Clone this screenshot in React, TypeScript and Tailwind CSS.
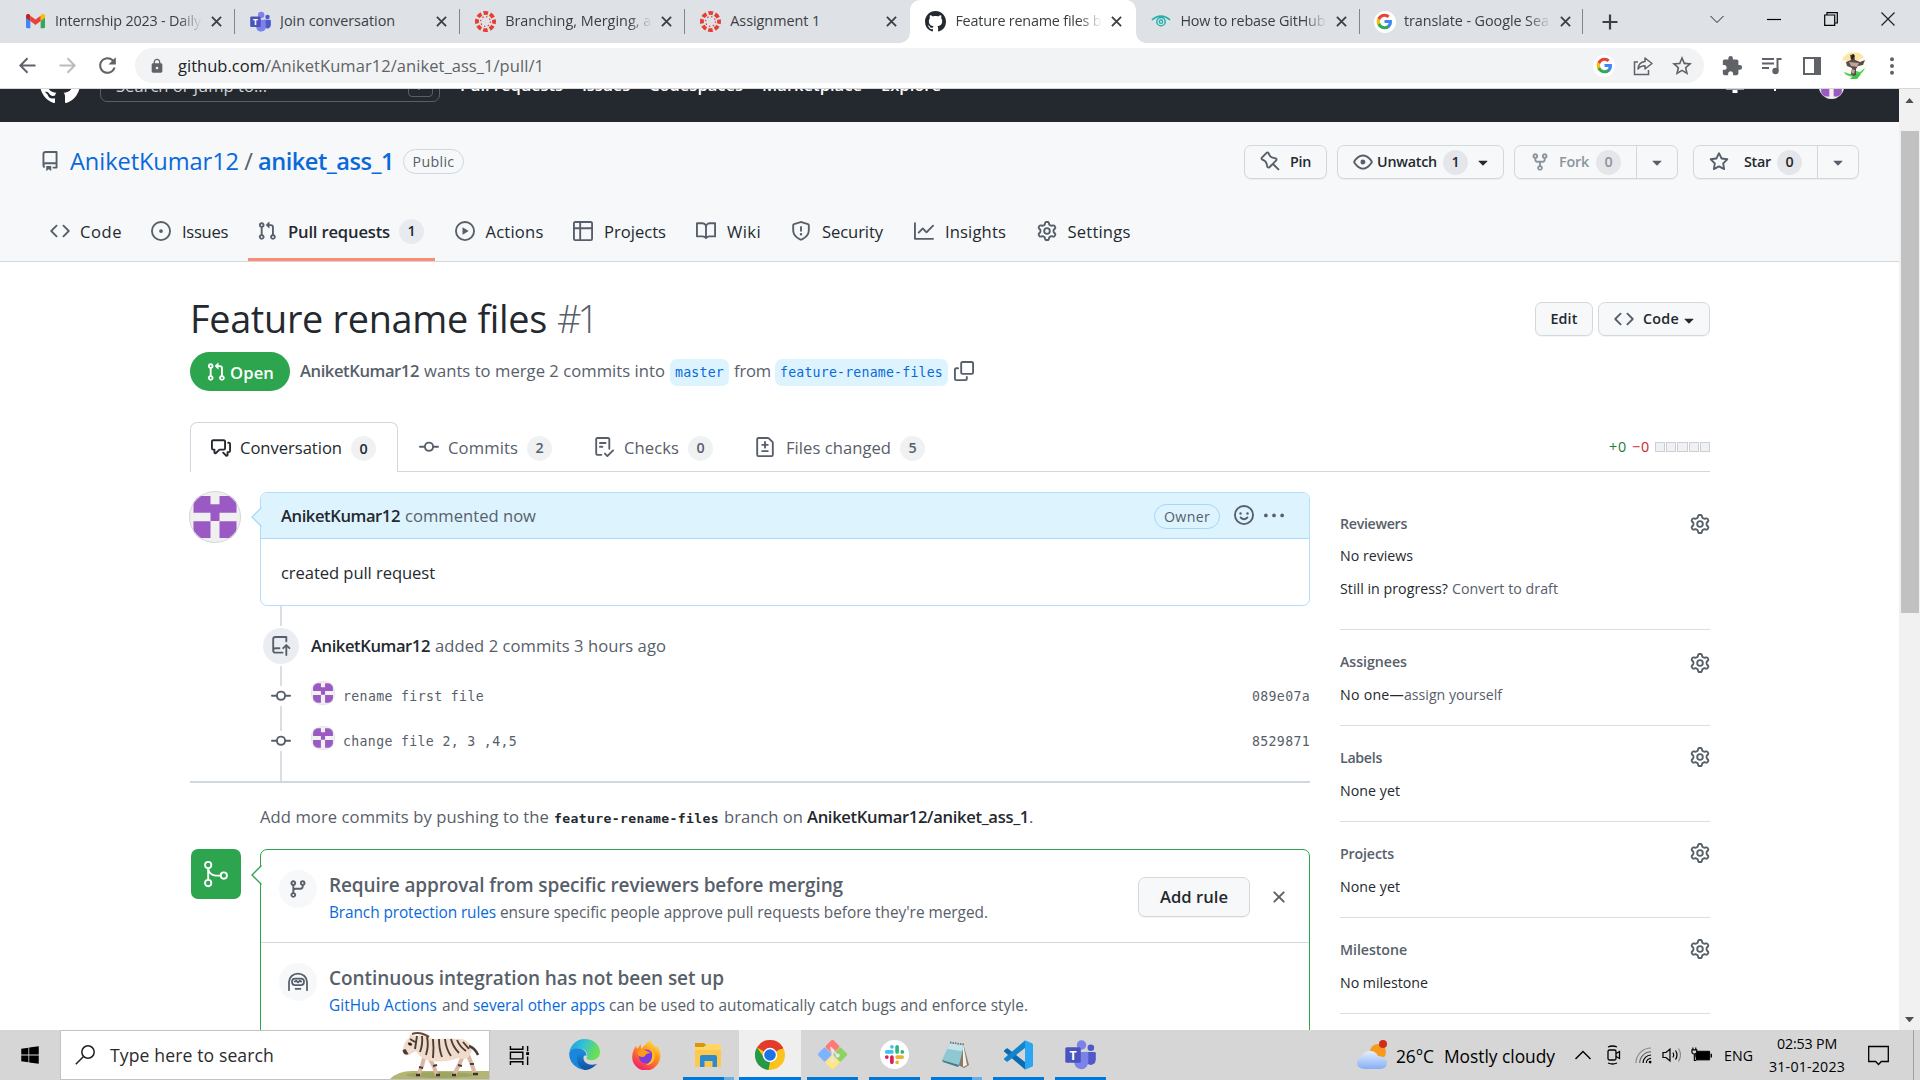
import React, { useLayoutEffect, useRef, useState } from "react";
import { GoGitMerge } from "react-icons/go";
import { MdExtension, MdLock, MdRefresh, MdStarBorder } from "react-icons/md";
import { FaWindows } from "react-icons/fa";

const octicons = {
  pr: "M1.5 3.25a2.25 2.25 0 1 1 3 2.122v5.256a2.251 2.251 0 1 1-1.5 0V5.372A2.25 2.25 0 0 1 1.5 3.25Zm5.677-.177L9.573.677A.25.25 0 0 1 10 .854V2.5h1A2.5 2.5 0 0 1 13.5 5v5.628a2.251 2.251 0 1 1-1.5 0V5a1 1 0 0 0-1-1h-1v1.646a.25.25 0 0 1-.427.177L7.177 3.427a.25.25 0 0 1 0-.354ZM3.75 2.5a.75.75 0 1 0 0 1.5.75.75 0 0 0 0-1.5Zm0 9.5a.75.75 0 1 0 0 1.5.75.75 0 0 0 0-1.5Zm8.25.75a.75.75 0 1 0 1.5 0 .75.75 0 0 0-1.5 0Z",
  code: "m11.28 3.22 4.25 4.25a.75.75 0 0 1 0 1.06l-4.25 4.25a.749.749 0 0 1-1.275-.326.749.749 0 0 1 .215-.734L13.94 8l-3.72-3.72a.749.749 0 0 1 .326-1.275.749.749 0 0 1 .734.215Zm-6.56 0a.751.751 0 0 1 1.042.018.751.751 0 0 1 .018 1.042L2.06 8l3.72 3.72a.749.749 0 0 1-.326 1.275.749.749 0 0 1-.734-.215L.47 8.53a.75.75 0 0 1 0-1.06Z",
  issue: "M8 9.5a1.5 1.5 0 1 0 0-3 1.5 1.5 0 0 0 0 3ZM8 0a8 8 0 1 1 0 16A8 8 0 0 1 8 0ZM1.5 8a6.5 6.5 0 1 0 13 0 6.5 6.5 0 0 0-13 0Z",
  play: "M8 0a8 8 0 1 1 0 16A8 8 0 0 1 8 0ZM1.5 8a6.5 6.5 0 1 0 13 0 6.5 6.5 0 0 0-13 0Zm4.879-2.773 4.264 2.559a.25.25 0 0 1 0 .428l-4.264 2.559A.25.25 0 0 1 6 10.559V5.442a.25.25 0 0 1 .379-.215Z",
  table: "M0 1.75C0 .784.784 0 1.75 0h12.5C15.216 0 16 .784 16 1.75v12.5A1.75 1.75 0 0 1 14.25 16H1.75A1.75 1.75 0 0 1 0 14.25ZM6.5 6.5v8h7.75a.25.25 0 0 0 .25-.25V6.5Zm8-1.5V1.75a.25.25 0 0 0-.25-.25H6.5V5Zm-13 1.5v7.75c0 .138.112.25.25.25H5v-8ZM5 5V1.5H1.75a.25.25 0 0 0-.25.25V5Z",
  book: "M0 1.75A.75.75 0 0 1 .75 1h4.253c1.227 0 2.317.59 3 1.501A3.743 3.743 0 0 1 11.006 1h4.245a.75.75 0 0 1 .75.75v10.5a.75.75 0 0 1-.75.75h-4.507a2.25 2.25 0 0 0-1.591.659l-.622.621a.75.75 0 0 1-1.06 0l-.622-.621A2.25 2.25 0 0 0 5.258 13H.75a.75.75 0 0 1-.75-.75Zm7.251 10.324.004-5.073-.002-2.253A2.25 2.25 0 0 0 5.003 2.5H1.5v9h3.757a3.75 3.75 0 0 1 1.994.574ZM8.755 4.75l-.004 7.322a3.752 3.752 0 0 1 1.992-.572H14.5v-9h-3.495a2.25 2.25 0 0 0-2.25 2.25Z",
  shield: "M7.467.133a1.748 1.748 0 0 1 1.066 0l5.25 1.68A1.75 1.75 0 0 1 15 3.48V7c0 1.566-.32 3.182-1.303 4.682-.983 1.498-2.585 2.813-5.032 3.855a1.697 1.697 0 0 1-1.33 0c-2.447-1.042-4.049-2.357-5.032-3.855C1.32 10.182 1 8.566 1 7V3.48a1.755 1.755 0 0 1 1.217-1.667Zm.61 1.429a.25.25 0 0 0-.153 0l-5.25 1.68a.25.25 0 0 0-.174.238V7c0 1.358.275 2.666 1.057 3.86.784 1.194 2.121 2.34 4.366 3.297a.196.196 0 0 0 .154 0c2.245-.956 3.582-2.104 4.366-3.298C13.225 9.666 13.5 8.36 13.5 7V3.48a.251.251 0 0 0-.174-.237l-5.25-1.68ZM8.75 4.75v3a.75.75 0 0 1-1.5 0v-3a.75.75 0 0 1 1.5 0ZM9 10.5a1 1 0 1 1-2 0 1 1 0 0 1 2 0Z",
  graph: "M1.5 1.75V13.5h13.75a.75.75 0 0 1 0 1.5H.75a.75.75 0 0 1-.75-.75V1.75a.75.75 0 0 1 1.5 0Zm14.28 2.53-5.25 5.25a.75.75 0 0 1-1.06 0L7 7.06 4.28 9.78a.751.751 0 0 1-1.042-.018.751.751 0 0 1-.018-1.042l3.25-3.25a.75.75 0 0 1 1.06 0L10 7.94l4.72-4.72a.751.751 0 0 1 1.042.018.751.751 0 0 1 .018 1.042Z",
  gear: "M8 0a8.2 8.2 0 0 1 .701.031C9.444.095 9.99.645 10.16 1.29l.288 1.107c.018.066.079.158.212.224.231.114.454.243.668.386.123.082.233.09.299.071l1.103-.303c.644-.176 1.392.021 1.82.63.27.385.506.792.704 1.218.315.675.111 1.422-.364 1.891l-.814.806c-.049.048-.098.147-.088.294.016.257.016.515 0 .772-.01.147.038.246.088.294l.814.806c.475.469.679 1.216.364 1.891a7.977 7.977 0 0 1-.704 1.217c-.428.61-1.176.807-1.82.63l-1.102-.302c-.067-.019-.177-.011-.3.071a5.909 5.909 0 0 1-.668.386c-.133.066-.194.158-.211.224l-.29 1.106c-.168.646-.715 1.196-1.458 1.26a8.006 8.006 0 0 1-1.402 0c-.743-.064-1.289-.614-1.458-1.26l-.289-1.106c-.018-.066-.079-.158-.212-.224a5.738 5.738 0 0 1-.668-.386c-.123-.082-.233-.09-.299-.071l-1.103.303c-.644.176-1.392-.021-1.82-.63a8.12 8.12 0 0 1-.704-1.218c-.315-.675-.111-1.422.363-1.891l.815-.806c.05-.048.098-.147.088-.294a6.214 6.214 0 0 1 0-.772c.01-.147-.038-.246-.088-.294l-.815-.806C.635 6.045.431 5.298.746 4.623a7.92 7.92 0 0 1 .704-1.217c.428-.61 1.176-.807 1.82-.63l1.102.302c.067.019.177.011.3-.071.214-.143.437-.272.668-.386.133-.066.194-.158.211-.224l.29-1.106C6.009.645 6.556.095 7.299.03 7.53.01 7.764 0 8 0Zm-.571 1.525c-.036.003-.108.036-.137.146l-.289 1.105c-.147.561-.549.967-.998 1.189-.173.086-.34.183-.5.29-.417.278-.97.423-1.529.27l-1.103-.303c-.109-.03-.175.016-.195.045-.22.312-.412.644-.573.99-.014.031-.021.11.059.19l.815.806c.411.406.562.957.53 1.456a4.709 4.709 0 0 0 0 .582c.032.499-.119 1.05-.53 1.456l-.815.806c-.081.08-.073.159-.059.19.162.346.353.677.573.989.02.03.085.076.195.046l1.102-.303c.56-.153 1.113-.008 1.53.27.161.107.328.204.501.29.447.222.85.629.997 1.189l.289 1.105c.029.109.101.143.137.146a6.6 6.6 0 0 0 1.142 0c.036-.003.108-.036.137-.146l.289-1.105c.147-.561.549-.967.998-1.189.173-.086.34-.183.5-.29.417-.278.97-.423 1.529-.27l1.103.303c.109.029.175-.016.195-.045.22-.313.411-.644.573-.99.014-.031.021-.11-.059-.19l-.815-.806c-.411-.406-.562-.957-.53-1.456a4.709 4.709 0 0 0 0-.582c-.032-.499.119-1.05.53-1.456l.815-.806c.081-.08.073-.159.059-.19a6.464 6.464 0 0 0-.573-.989c-.02-.03-.085-.076-.195-.046l-1.102.303c-.56.153-1.113.008-1.53-.27a4.44 4.44 0 0 0-.501-.29c-.447-.222-.85-.629-.997-1.189l-.289-1.105c-.029-.11-.101-.143-.137-.146a6.6 6.6 0 0 0-1.142 0ZM11 8a3 3 0 1 1-6 0 3 3 0 0 1 6 0ZM9.5 8a1.5 1.5 0 1 0-3.001.001A1.5 1.5 0 0 0 9.5 8Z",
  repo: "M2 2.5A2.5 2.5 0 0 1 4.5 0h8.75a.75.75 0 0 1 .75.75v12.5a.75.75 0 0 1-.75.75h-2.5a.75.75 0 0 1 0-1.5h1.75v-2h-8a1 1 0 0 0-.714 1.7.75.75 0 1 1-1.072 1.05A2.495 2.495 0 0 1 2 11.5Zm10.5-1h-8a1 1 0 0 0-1 1v6.708A2.486 2.486 0 0 1 4.5 9h8ZM5 12.25a.25.25 0 0 1 .25-.25h3.5a.25.25 0 0 1 .25.25v3.25a.25.25 0 0 1-.4.2l-1.45-1.087a.249.249 0 0 0-.3 0L5.4 15.7a.25.25 0 0 1-.4-.2Z",
  pin: "m11.294.984 3.722 3.722a1.75 1.75 0 0 1-.504 2.826l-1.327.613a3.089 3.089 0 0 0-1.707 2.084l-.584 2.454c-.317 1.332-1.972 1.8-2.94.832L5.75 11.311 1.78 15.28a.749.749 0 1 1-1.06-1.06l3.969-3.97-2.204-2.204c-.968-.968-.5-2.623.832-2.94l2.454-.584a3.08 3.08 0 0 0 2.084-1.707l.613-1.327a1.75 1.75 0 0 1 2.826-.504ZM6.283 9.723l2.732 2.731a.25.25 0 0 0 .42-.119l.584-2.454a4.586 4.586 0 0 1 2.537-3.098l1.328-.613a.25.25 0 0 0 .072-.404l-3.722-3.722a.25.25 0 0 0-.404.072l-.613 1.328a4.584 4.584 0 0 1-3.098 2.537l-2.454.584a.25.25 0 0 0-.119.42l2.731 2.732Z",
  eye: "M8 2c1.981 0 3.671.992 4.933 2.078 1.27 1.091 2.187 2.345 2.637 3.023a1.62 1.62 0 0 1 0 1.798c-.45.678-1.367 1.932-2.637 3.023C11.67 13.008 9.981 14 8 14c-1.981 0-3.671-.992-4.933-2.078C1.797 10.83.88 9.576.43 8.898a1.62 1.62 0 0 1 0-1.798c.45-.677 1.367-1.931 2.637-3.022C4.33 2.992 6.019 2 8 2ZM1.679 7.932a.12.12 0 0 0 0 .136c.411.622 1.241 1.75 2.366 2.717C5.176 11.758 6.527 12.5 8 12.5c1.473 0 2.825-.742 3.955-1.715 1.124-.967 1.954-2.096 2.366-2.717a.12.12 0 0 0 0-.136c-.412-.621-1.242-1.75-2.366-2.717C10.824 4.242 9.473 3.5 8 3.5c-1.473 0-2.825.742-3.955 1.715-1.124.967-1.954 2.096-2.366 2.717ZM8 10a2 2 0 1 1-.001-3.999A2 2 0 0 1 8 10Z",
  fork: "M5 5.372v.878c0 .414.336.75.75.75h4.5a.75.75 0 0 0 .75-.75v-.878a2.25 2.25 0 1 1 1.5 0v.878a2.25 2.25 0 0 1-2.25 2.25h-1.5v2.128a2.251 2.251 0 1 1-1.5 0V8.5h-1.5A2.25 2.25 0 0 1 3.5 6.25v-.878a2.25 2.25 0 1 1 1.5 0ZM5 3.25a.75.75 0 1 0-1.5 0 .75.75 0 0 0 1.5 0Zm6.75.75a.75.75 0 1 0 0-1.5.75.75 0 0 0 0 1.5Zm-3 8.75a.75.75 0 1 0-1.5 0 .75.75 0 0 0 1.5 0Z",
  star: "M8 .25a.75.75 0 0 1 .673.418l1.882 3.815 4.21.612a.75.75 0 0 1 .416 1.279l-3.046 2.97.719 4.192a.751.751 0 0 1-1.088.791L8 12.347l-3.766 1.98a.75.75 0 0 1-1.088-.79l.72-4.194L.818 6.374a.75.75 0 0 1 .416-1.28l4.21-.611L7.327.668A.75.75 0 0 1 8 .25Zm0 2.445L6.615 5.5a.75.75 0 0 1-.564.41l-3.097.45 2.24 2.184a.75.75 0 0 1 .216.664l-.528 3.084 2.769-1.456a.75.75 0 0 1 .698 0l2.77 1.456-.53-3.084a.75.75 0 0 1 .216-.664l2.24-2.183-3.096-.45a.75.75 0 0 1-.564-.41L8 2.694Z",
  copy: "M0 6.75C0 5.784.784 5 1.75 5h1.5a.75.75 0 0 1 0 1.5h-1.5a.25.25 0 0 0-.25.25v7.5c0 .138.112.25.25.25h7.5a.25.25 0 0 0 .25-.25v-1.5a.75.75 0 0 1 1.5 0v1.5A1.75 1.75 0 0 1 9.25 16h-7.5A1.75 1.75 0 0 1 0 14.25ZM5 1.75C5 .784 5.784 0 6.75 0h7.5C15.216 0 16 .784 16 1.75v7.5A1.75 1.75 0 0 1 14.25 11h-7.5A1.75 1.75 0 0 1 5 9.25Zm1.75-.25a.25.25 0 0 0-.25.25v7.5c0 .138.112.25.25.25h7.5a.25.25 0 0 0 .25-.25v-7.5a.25.25 0 0 0-.25-.25Z",
  discussion: "M1.75 1h8.5c.966 0 1.75.784 1.75 1.75v5.5A1.75 1.75 0 0 1 10.25 10H7.061l-2.574 2.573A1.458 1.458 0 0 1 2 11.543V10h-.25A1.75 1.75 0 0 1 0 8.25v-5.5C0 1.784.784 1 1.75 1ZM1.5 2.75v5.5c0 .138.112.25.25.25h1a.75.75 0 0 1 .75.75v2.19l2.72-2.72a.749.749 0 0 1 .53-.22h3.5a.25.25 0 0 0 .25-.25v-5.5a.25.25 0 0 0-.25-.25h-8.5a.25.25 0 0 0-.25.25Zm13 2a.25.25 0 0 0-.25-.25h-.5a.75.75 0 0 1 0-1.5h.5c.966 0 1.75.784 1.75 1.75v5.5A1.75 1.75 0 0 1 14.25 12H14v1.543a1.458 1.458 0 0 1-2.487 1.03L9.22 12.28a.749.749 0 0 1 .326-1.275.749.749 0 0 1 .734.215l2.22 2.22v-2.19a.75.75 0 0 1 .75-.75h1a.25.25 0 0 0 .25-.25Z",
  commit: "M11.93 8.5a4.002 4.002 0 0 1-7.86 0H.75a.75.75 0 0 1 0-1.5h3.32a4.002 4.002 0 0 1 7.86 0h3.32a.75.75 0 0 1 0 1.5Zm-1.43-.75a2.5 2.5 0 1 0-5 0 2.5 2.5 0 0 0 5 0Z",
  checklist: "M2.5 1.75v11.5c0 .138.112.25.25.25h3.17a.75.75 0 0 1 0 1.5H2.75A1.75 1.75 0 0 1 1 13.25V1.75C1 .784 1.784 0 2.75 0h8.5C12.216 0 13 .784 13 1.75v7.736a.75.75 0 0 1-1.5 0V1.75a.25.25 0 0 0-.25-.25h-8.5a.25.25 0 0 0-.25.25Zm13.274 9.537v-.001l-4.557 4.45a.75.75 0 0 1-1.055-.008l-1.943-1.95a.75.75 0 0 1 1.062-1.058l1.419 1.425 4.026-3.932a.75.75 0 1 1 1.048 1.074ZM4.75 4h4.5a.75.75 0 0 1 0 1.5h-4.5a.75.75 0 0 1 0-1.5ZM4 7.75A.75.75 0 0 1 4.75 7h2a.75.75 0 0 1 0 1.5h-2A.75.75 0 0 1 4 7.75Z",
  diff: "M1 1.75C1 .784 1.784 0 2.75 0h7.586c.464 0 .909.184 1.237.513l2.914 2.914c.329.328.513.773.513 1.237v9.586A1.75 1.75 0 0 1 13.25 16H2.75A1.75 1.75 0 0 1 1 14.25Zm1.75-.25a.25.25 0 0 0-.25.25v12.5c0 .138.112.25.25.25h10.5a.25.25 0 0 0 .25-.25V4.664a.25.25 0 0 0-.073-.177l-2.914-2.914a.25.25 0 0 0-.177-.073ZM8 3.25a.75.75 0 0 1 .75.75v1.5h1.5a.75.75 0 0 1 0 1.5h-1.5v1.5a.75.75 0 0 1-1.5 0V7h-1.5a.75.75 0 0 1 0-1.5h1.5V4A.75.75 0 0 1 8 3.25Zm-3 8a.75.75 0 0 1 .75-.75h4.5a.75.75 0 0 1 0 1.5h-4.5a.75.75 0 0 1-.75-.75Z",
  push: "M1 2.5A2.5 2.5 0 0 1 3.5 0h8.75a.75.75 0 0 1 .75.75v3.5a.75.75 0 0 1-1.5 0V1.5h-8a1 1 0 0 0-1 1v6.708A2.493 2.493 0 0 1 3.5 9h3.25a.75.75 0 0 1 0 1.5H3.5a1 1 0 0 0 0 2h5.75a.75.75 0 0 1 0 1.5H3.5A2.5 2.5 0 0 1 1 11.5Zm13.23 7.79h-.001l-1.224-1.224v6.184a.75.75 0 0 1-1.5 0V9.066L10.28 10.29a.75.75 0 0 1-1.06-1.061l2.505-2.504a.75.75 0 0 1 1.06 0L15.29 9.23a.751.751 0 0 1-.018 1.042.751.751 0 0 1-1.042.018Z",
  branch: "M9.5 3.25a2.25 2.25 0 1 1 3 2.122V6A2.5 2.5 0 0 1 10 8.5H6a1 1 0 0 0-1 1v1.128a2.251 2.251 0 1 1-1.5 0V5.372a2.25 2.25 0 1 1 1.5 0v1.836A2.493 2.493 0 0 1 6 7h4a1 1 0 0 0 1-1v-.628A2.25 2.25 0 0 1 9.5 3.25Zm-6 0a.75.75 0 1 0 1.5 0 .75.75 0 0 0-1.5 0Zm8.25-.75a.75.75 0 1 0 0 1.5.75.75 0 0 0 0-1.5ZM4.25 12a.75.75 0 1 0 0 1.5.75.75 0 0 0 0-1.5Z",
  x: "M3.72 3.72a.75.75 0 0 1 1.06 0L8 6.94l3.22-3.22a.749.749 0 0 1 1.275.326.749.749 0 0 1-.215.734L9.06 8l3.22 3.22a.749.749 0 0 1-.326 1.275.749.749 0 0 1-.734-.215L8 9.06l-3.22 3.22a.751.751 0 0 1-1.042-.018.751.751 0 0 1-.018-1.042L6.94 8 3.72 4.78a.75.75 0 0 1 0-1.06Z",
  mark: "M8 0c4.42 0 8 3.58 8 8a8.013 8.013 0 0 1-5.45 7.59c-.4.08-.55-.17-.55-.38 0-.27.01-1.13.01-2.2 0-.75-.25-1.23-.54-1.48 1.78-.2 3.65-.88 3.65-3.95 0-.88-.31-1.59-.82-2.15.08-.2.36-1.02-.08-2.12 0 0-.67-.22-2.2.82-.64-.18-1.32-.27-2-.27-.68 0-1.36.09-2 .27-1.53-1.03-2.2-.82-2.2-.82-.44 1.1-.16 1.92-.08 2.12-.51.56-.82 1.28-.82 2.15 0 3.06 1.86 3.75 3.64 3.95-.23.2-.44.55-.51 1.07-.46.21-1.61.55-2.33-.66-.15-.24-.6-.83-1.23-.82-.67.01-.27.38.01.53.34.19.73.9.82 1.13.16.45.68 1.31 2.69.94 0 .67.01 1.3.01 1.49 0 .21-.15.45-.55.38A7.995 7.995 0 0 1 0 8c0-4.42 3.58-8 8-8Z",
  triangle: "m4.427 7.427 3.396 3.396a.25.25 0 0 0 .354 0l3.396-3.396A.25.25 0 0 0 11.396 7H4.604a.25.25 0 0 0-.177.427Z",
  kebab: "M8 9a1.5 1.5 0 1 0 0-3 1.5 1.5 0 0 0 0 3ZM1.5 9a1.5 1.5 0 1 0 0-3 1.5 1.5 0 0 0 0 3Zm13 0a1.5 1.5 0 1 0 0-3 1.5 1.5 0 0 0 0 3Z",
};

type IconName = keyof typeof octicons;

function Oct({ n, className = "size-5 text-[#57606a]" }: { n: IconName; className?: string }) {
  return (
    <svg viewBox="0 0 16 16" fill="currentColor" className={`shrink-0 ${className}`}>
      <path fillRule="evenodd" d={octicons[n]} />
    </svg>
  );
}

/* Single-line label whose tracking is adjusted so that it spans `w` pixels. */
function T({ w, children, className = "" }: { w: number; children: string; className?: string }) {
  const ref = useRef<HTMLSpanElement>(null);
  const [spacing, setSpacing] = useState(0);
  useLayoutEffect(() => {
    const natural = ref.current!.getBoundingClientRect().width;
    setSpacing((w - natural) / children.length);
  }, [w, children]);
  return (
    <span ref={ref} style={{ letterSpacing: spacing }} className={`inline-block shrink-0 whitespace-pre ${className}`}>
      {children}
    </span>
  );
}

function Identicon({ className }: { className: string }) {
  return (
    <svg viewBox="0 0 52 52" className={`shrink-0 ${className}`}>
      <defs>
        <clipPath id="avatar-clip"><circle cx="26" cy="26" r="26" /></clipPath>
      </defs>
      <g clipPath="url(#avatar-clip)">
        <rect width="52" height="52" fill="#f0f0f0" />
        <path d="M4.5 5h17v8.3h9V5h17v16.7h-17V30h-9v-8.3h-17zM4.5 30.2h17V47h-17zM30.5 30.2h17V47h-17z" fill="#9b59c4" />
      </g>
      <circle cx="26" cy="26" r="25.5" fill="none" stroke="#d5d8dc" />
    </svg>
  );
}

/* ---------- brand icons ---------- */

const Gmail = () => (
  <svg viewBox="0 0 24 18" className="w-[19px]">
    <path d="M0 2v14.5A1.5 1.5 0 0 0 1.5 18H5.5V8.5z" fill="#4285f4" />
    <path d="M24 2v14.500A1.500 1.500 0 0 1 22.500 18H18.500V8.500z" fill="#34a853" />
    <path d="M18.500 2.200v6.700L24 4.700V2.500C24 .3 21.400-.9 19.700.4z" fill="#fbbc04" />
    <path d="M5.500 8.900V2.200L12 7.100l6.500-4.900v6.700L12 13.800z" fill="#ea4335" />
    <path d="M0 2.500v2.200l5.500 4.200V2.200L4.300.4C2.600-.9 0 .3 0 2.500z" fill="#c5221f" />
  </svg>
);

function Teams({ className }: { className: string }) {
  return (
    <svg viewBox="0 0 30 30" className={className}>
      <circle cx="25" cy="8.500" r="3.200" fill="#5059c9" />
      <circle cx="16" cy="5.800" r="4.600" fill="#7b83eb" />
      <path d="M20 12.500h8.500q1.300 0 1.300 1.300v6.200a5 5 0 0 1-8 4z" fill="#5059c9" />
      <path d="M9 12.500h13.500v9.500a6.800 6.800 0 0 1-13.500 1.500z" fill="#7b83eb" />
      <rect x="0.300" y="8" width="15" height="15" rx="1.500" fill="#4b53bc" />
      <text x="7.800" y="20" textAnchor="middle" fontSize="12" fontWeight="700" fill="#fff" fontFamily="Open Sans, sans-serif">T</text>
    </svg>
  );
}

const Canvas = () => (
  <svg viewBox="0 0 24 24" className="size-[21px]">
    <circle cx="12" cy="12" r="9.800" fill="none" stroke="#e63e30" strokeWidth="4.400" strokeDasharray="5.200 2.497" strokeDashoffset="2.600" />
    <circle cx="12" cy="12" r="5.600" fill="none" stroke="#e63e30" strokeWidth="1.500" strokeDasharray="1.500 2.898" />
  </svg>
);

const EyeLogo = () => (
  <svg viewBox="0 0 22 18" className="w-[20px]" fill="none" stroke="#22b0ac">
    <path d="M1 7.500Q11-.5 21 7.500" strokeWidth="1.800" />
    <circle cx="11" cy="9.500" r="4.600" strokeWidth="1.600" />
    <circle cx="11" cy="9.500" r="1.800" strokeWidth="1.400" />
  </svg>
);

function Google({ className }: { className: string }) {
  return (
    <span className="grid size-[22px] shrink-0 place-items-center rounded-full bg-white">
      <svg viewBox="0 0 24 24" className={className}>
        <path fill="#4285F4" d="M22.560 12.250c0-.78-.07-1.530-.2-2.250H12v4.260h5.920c-.26 1.370-1.040 2.530-2.210 3.310v2.770h3.570c2.080-1.920 3.280-4.740 3.280-8.090z" />
        <path fill="#34A853" d="M12 23c2.970 0 5.460-.98 7.280-2.660l-3.570-2.770c-.98.66-2.230 1.060-3.710 1.060-2.860 0-5.290-1.930-6.160-4.530H2.180v2.840C3.990 20.530 7.700 23 12 23z" />
        <path fill="#FBBC05" d="M5.840 14.090c-.22-.66-.35-1.360-.35-2.090s.13-1.430.35-2.090V7.070H2.180C1.430 8.550 1 10.220 1 12s.43 3.450 1.180 4.930l2.850-2.220.81-.62z" />
        <path fill="#EA4335" d="M12 5.380c1.620 0 3.060.56 4.210 1.640l3.150-3.150C17.450 2.090 14.970 1 12 1 7.700 1 3.990 3.470 2.180 7.070l3.660 2.840c.87-2.600 3.300-4.530 6.160-4.530z" />
      </svg>
    </span>
  );
}

/* ---------- browser chrome ---------- */

const tabs = [
  { title: "Internship 2023 - Daily", w: 146, icon: <Gmail />, fade: true },
  { title: "Join conversation", w: 115, icon: <Teams className="size-[21px]" /> },
  { title: "Branching, Merging, a", w: 146, icon: <Canvas />, fade: true },
  { title: "Assignment 1", w: 90, icon: <Canvas /> },
  { title: "Feature rename files b", w: 146, icon: <Oct n="mark" className="size-[21px] text-[#24292f]" />, active: true, fade: true },
  { title: "How to rebase GitHub", w: 145, icon: <EyeLogo />, fade: true },
  { title: "translate - Google Sea", w: 145, icon: <Google className="size-[17px]" />, fade: true },
];

function TabStrip() {
  return (
    <div className="flex h-[43px] shrink-0 bg-[#dee1e6] pl-[10px]">
      {tabs.map((t, i) => (
        <div
          key={i}
          className={`relative flex h-[43px] shrink-0 items-center ${t.active ? "w-[226px] rounded-t-[10px] bg-white pl-[15px]" : i > 4 ? "w-[223.500px] pl-[14px]" : "w-[225.100px] pl-[15px]"}`}
        >
          <span className="grid w-[21px] place-items-center">{t.icon}</span>
          <div
            className={`-mt-[2px] ml-[9px] w-[147px] overflow-hidden text-[14.400px] text-[#3c4043] ${t.fade ? "[mask-image:linear-gradient(to_right,#000_84%,transparent)]" : ""}`}
          >
            <T w={t.w}>{t.title}</T>
          </div>
          <svg viewBox="0 0 12 12" className="ml-[9px] size-[11px] shrink-0 stroke-[#3c4043]" strokeWidth="2">
            <path d="M1 1l10 10M11 1L1 11" />
          </svg>
          {t.active ? (
            <>
              <span className="absolute bottom-0 -left-[10px] size-[10px] bg-[radial-gradient(circle_at_0_0,transparent_9.500px,#fff_10px)]" />
              <span className="absolute bottom-0 -right-[10px] size-[10px] bg-[radial-gradient(circle_at_100%_0,transparent_9.500px,#fff_10px)]" />
            </>
          ) : (
            i !== 3 && <span className="absolute top-[9px] right-0 h-[25px] w-px bg-[#80868b]" />
          )}
        </div>
      ))}
      <div className="flex flex-1 items-center">
        <svg viewBox="0 0 16 16" className="ml-[19px] size-4 stroke-[#3c4043]" strokeWidth="2.200">
          <path d="M8 .5v15M.5 8h15" />
        </svg>
        <div className="ml-[92px] flex items-center gap-[43px] pb-[6px]">
          <svg viewBox="0 0 14 14" className="size-[14px] fill-none stroke-[#202124]"><path d="M.5 4L7 10.500 13.500 4" /></svg>
          <svg viewBox="0 0 14 14" className="size-[14px] fill-none stroke-[#000]"><path d="M0 7.500h14" strokeWidth="1.200" /></svg>
          <svg viewBox="0 0 14 14" className="size-[14px] fill-none stroke-[#000]" strokeWidth="1.200"><path d="M.7 3h10v10.300H.7zM3 3V.7h10.300V11H11" /></svg>
          <svg viewBox="0 0 14 14" className="size-[14px] fill-none stroke-[#202124]" strokeWidth="1.200"><path d="M.5.5l13 13M13.500.5l-13 13" /></svg>
        </div>
      </div>
    </div>
  );
}

function Arrow({ flip, className }: { flip?: boolean; className: string }) {
  return (
    <svg viewBox="0 0 17 17" className={`size-[17px] fill-none stroke-2 ${flip ? "-scale-x-100" : ""} ${className}`}>
      <path d="M16.500 8.500h-15M8.500 1.200L1.300 8.500l7.200 7.300" />
    </svg>
  );
}

function Toolbar() {
  return (
    <div className="flex h-[46px] shrink-0 items-center border-b border-[#d5d7da] bg-white">
      <Arrow className="ml-[19px] stroke-[#5f6368]" />
      <Arrow flip className="ml-[23px] stroke-[#babcbe]" />
      <MdRefresh className="ml-[19px] size-[25px] text-[#5f6368]" />
      <div className="ml-[15px] flex h-[35px] w-[1569px] items-center rounded-full bg-[#f1f3f4]">
        <MdLock className="mt-px ml-[14px] size-[16px] text-[#5f6368]" />
        <div className="mt-[2px] ml-[13px] flex text-[16.500px] text-[#5f6368]">
          <T w={87} className="text-[#202124]">github.com</T>
          <T w={279}>/AniketKumar12/aniket_ass_1/pull/1</T>
        </div>
        <div className="ml-auto mr-[10px] flex items-center">
          <Google className="size-[17px]" />
          <svg viewBox="0 0 20 20" className="ml-[18px] size-5 fill-none stroke-[#5f6368]" strokeWidth="1.500">
            <path d="M5 6H1.500v12.500h14V14" />
            <path d="M12 2l7 5.500-7 5.500v-3.300c-3.500 0-5.500 1-7 3.300.3-4.500 3-7 7-7.500z" strokeLinejoin="round" />
          </svg>
          <MdStarBorder className="ml-[17px] size-[24px] text-[#5f6368]" />
        </div>
      </div>
      <MdExtension className="ml-[17px] size-[22px] text-[#5f6368]" />
      <svg viewBox="0 0 20 18" className="ml-[19px] w-5 fill-none stroke-[#5f6368]" strokeWidth="2">
        <path d="M0 2h12M0 6.500h12M0 11h7M15.500 14V2h4" />
        <circle cx="13.500" cy="14" r="2.200" fill="#5f6368" />
      </svg>
      <svg viewBox="0 0 18 18" className="ml-[21px] w-[18px]">
        <path d="M1 1h16v16H1z" fill="none" stroke="#5f6368" strokeWidth="2" />
        <path d="M11 1h6v16h-6z" fill="#5f6368" />
      </svg>
      <svg viewBox="0 0 28 28" className="ml-[19px] size-7">
        <circle cx="14" cy="14" r="13.500" fill="#fdfdf5" />
        <path d="M2 8a13 13 0 0 1 22-3l-8 5z" fill="#fbe7a3" />
        <path d="M4 20l6 2 6-3 4 1 5-4a13 13 0 0 1-20 6z" fill="#4fd15c" />
        <path d="M10 27q5-6 11-5l-4 5z" fill="#3fc54d" />
        <path d="M10 3l4-1 1 6 5 2 5-2-2 5-5 1-2 3v6l-3 1-2-2 1-6-5-2-1-4 5-2z" fill="#5b4a45" />
        <path d="M9 10l10 1-2 4-6-1zM12 17l3 1-1 4-2-1z" fill="#b9a79c" />
        <path d="M13 2l2 2-3 4-1-3z" fill="#20222b" />
      </svg>
      <svg viewBox="0 0 4 18" className="ml-[22px] h-[18px] fill-[#5f6368]">
        <circle cx="2" cy="2.200" r="2" /><circle cx="2" cy="9" r="2" /><circle cx="2" cy="15.800" r="2" />
      </svg>
    </div>
  );
}

/* ---------- page ---------- */

function SiteHeader() {
  return (
    <div className="h-[33px] shrink-0 overflow-hidden bg-[#24292f]">
      <div className="-mt-[44px] flex h-[78px] items-center text-white">
        <Oct n="mark" className="ml-[40px] size-10 text-white" />
        <div className="ml-[20px] flex h-[36px] w-[340px] items-center justify-between rounded-[7px] border border-[#57606a] pr-[6px] pl-[15px] text-[16.600px] text-[#d0d3d6]">
          <T w={151} className="pt-[4px]">Search or jump to...</T>
          <span className="grid h-[26px] w-[25px] place-items-center rounded-[4px] border border-[#57606a] text-[14px] text-[#8c959f]">/</span>
        </div>
        <nav className="ml-[20px] flex gap-[19px] pt-[2px] text-[16.600px] font-semibold">
          <T w={103}>Pull requests</T>
          <T w={48}>Issues</T>
          <T w={94}>Codespaces</T>
          <T w={100}>Marketplace</T>
          <T w={60}>Explore</T>
        </nav>
        <div className="ml-auto flex items-center pr-[55px]">
          <svg viewBox="0 0 20 20" className="size-5 fill-none stroke-white" strokeWidth="1.900">
            <path d="M4.500 8a5.500 5.500 0 0 1 11 0v3l2 3.500h-15l2-3.500z" /><path d="M7.500 17.500h5" strokeWidth="3" />
          </svg>
          <svg viewBox="0 0 16 16" className="ml-[22px] size-4 stroke-white" strokeWidth="2"><path d="M8 1v14M1 8h14" /></svg>
          <Oct n="triangle" className="ml-[3px] size-5 text-white" />
          <Identicon className="mt-[4px] ml-[13px] size-[25px]" />
        </div>
      </div>
    </div>
  );
}

const btn = "flex items-center rounded-[7px] border border-[#d5d8da] bg-[#f6f8fa] text-[14.300px] font-semibold text-[#24292f] shadow-[0_1px_0_rgba(27,31,36,0.05)]";

function Count({ children, className = "bg-[#e7eaee] text-[#24292f]" }: { children: string; className?: string }) {
  return <span className={`grid h-[25px] w-[25px] shrink-0 place-items-center rounded-full text-[14.300px] font-semibold ${className}`}>{children}</span>;
}

const repoNav: { icon: IconName; label: string; w: number; ml: string }[] = [
  { icon: "play", label: "Actions", w: 58, ml: "ml-[29.500px]" },
  { icon: "table", label: "Projects", w: 62, ml: "ml-[29.500px]" },
  { icon: "book", label: "Wiki", w: 34, ml: "ml-[30px]" },
  { icon: "shield", label: "Security", w: 61, ml: "ml-[30px]" },
  { icon: "graph", label: "Insights", w: 61, ml: "ml-[31px]" },
  { icon: "gear", label: "Settings", w: 63, ml: "ml-[30.500px]" },
];

function RepoHeader() {
  return (
    <div className="h-[140px] shrink-0 border-b border-[#d0d7de] bg-[#f6f8fa] pt-[23px]">
      <div className="flex h-[34px] items-center pr-[40px] pl-[40px]">
        <Oct n="repo" className="-mt-[2px] size-5 text-[#57606a]" />
        <div className="ml-[10px] flex text-[23.600px] text-[#0969da]">
          <T w={169}>AniketKumar12</T>
          <span className="w-[19px] text-center text-[#57606a]">/</span>
          <T w={136} className="font-semibold">aniket_ass_1</T>
        </div>
        <span className="-mt-px ml-[9px] grid h-[25px] w-[61px] place-items-center rounded-full border border-[#d0d7de] text-[14.200px] font-medium text-[#57606a]">
          <T w={42}>Public</T>
        </span>
        <div className="ml-auto flex">
          <div className={`${btn} h-[34px] w-[83px] pl-[15px]`}>
            <Oct n="pin" className="-mt-[2px] size-5 -scale-x-100 text-[#57606a]" /><T w={21} className="ml-[10px]">Pin</T>
          </div>
          <div className={`${btn} ml-[10px] h-[34px] w-[167px] pl-[15px]`}>
            <Oct n="eye" className="-mt-px size-5 text-[#57606a]" /><T w={60} className="ml-[4px]">Unwatch</T>
            <Count className="ml-[6px] bg-[#e4e6e9]">1</Count>
            <Oct n="triangle" className="ml-[5px] size-5" />
          </div>
          <div className={`${btn} ml-[10px] h-[34px] w-[164px]`}>
            <div className="flex h-full w-[122px] items-center border-r border-[#d5d8da] pl-[15px] text-[#8c959f]">
              <Oct n="fork" className="-mt-px size-5 text-[#8c959f]" /><T w={30} className="ml-[9px]">Fork</T>
              <Count className="ml-[7px] bg-[#e4e6e9]">0</Count>
            </div>
            <Oct n="triangle" className="-mt-px ml-[10px] size-5 text-[#57606a]" />
          </div>
          <div className={`${btn} ml-[15px] h-[34px] w-[166px]`}>
            <div className="flex h-full w-[124px] items-center border-r border-[#d5d8da] pl-[15px]">
              <Oct n="star" className="-mt-px size-5 text-[#57606a]" /><T w={27} className="ml-[15px]">Star</T>
              <Count className="ml-[6px] bg-[#e4e6e9]">0</Count>
            </div>
            <Oct n="triangle" className="-mt-px ml-[10px] size-5 text-[#57606a]" />
          </div>
        </div>
      </div>
      <nav className="mt-[22px] flex h-[60px] items-center pl-[50px] text-[16.600px] text-[#24292f]">
        <Oct n="code" /><T w={42} className="ml-[10px] pt-[3px]">Code</T>
        <Oct n="issue" className="ml-[29px] size-5 text-[#57606a]" /><T w={46} className="ml-[11px] pt-[3px]">Issues</T>
        <div className="ml-[20px] flex h-full w-[187px] items-center border-b-[3px] border-[#fd8c73] pt-[3px] pl-[9px] font-semibold">
          <Oct n="pr" /><T w={102} className="ml-[11px] pt-[3px]">Pull requests</T>
          <Count className="ml-[9px] bg-[#e7eaee]">1</Count>
        </div>
        <div className="-ml-[10px] flex items-center">
          {repoNav.map((r) => (
            <div key={r.label} className={`flex items-center ${r.ml}`}>
              <Oct n={r.icon} /><T w={r.w} className="ml-[11px] pt-[3px]">{r.label}</T>
            </div>
          ))}
        </div>
      </nav>
    </div>
  );
}

function PullHeader() {
  return (
    <div className="w-[1520px]">
      <div className="mt-[34px] flex h-[46px] items-center">
        <div className="flex items-baseline text-[37.800px] text-[#24292f]">
          <T w={357}>Feature rename files</T>
          <T w={38} className="ml-[10px] font-light text-[#57606a]">#1</T>
        </div>
        <div className={`${btn} ml-auto h-[34px] w-[58px] justify-center`}><T w={27}>Edit</T></div>
        <div className={`${btn} ml-[5px] h-[34px] w-[112px] pl-[15px]`}>
          <Oct n="code" className="-mt-px size-5 text-[#57606a]" /><T w={36} className="ml-[9px]">Code</T><Oct n="triangle" className="mt-px size-5" />
        </div>
      </div>
      <div className="mt-[10px] flex h-[39px] items-center text-[16.600px] text-[#57606a]">
        <div className="flex h-[39px] w-[100px] items-center rounded-full bg-[#2da44e] pl-[16px] font-semibold text-white">
          <Oct n="pr" className="mt-px size-5 text-white" /><T w={44} className="ml-[4px] pt-[3px]">Open</T>
        </div>
        <T w={119} className="ml-[10px] font-semibold">AniketKumar12</T>
        <T w={241} className="ml-[5px]">wants to merge 2 commits into</T>
        <Branch w={49} className="ml-[5px] w-[59px]">master</Branch>
        <T w={37} className="ml-[5px]">from</T>
        <Branch w={163} className="ml-[4px] w-[173px]">feature-rename-files</Branch>
        <Oct n="copy" className="-mt-px ml-[6px] size-5 text-[#57606a]" />
      </div>
    </div>
  );
}

function Branch({ w, children, className }: { w: number; children: string; className: string }) {
  return (
    <span className={`mt-[2px] grid h-[27px] place-items-center rounded-[7px] bg-[#ddf4ff] font-['DejaVu_Sans_Mono',monospace] text-[13.200px] text-[#0969da] ${className}`}>
      <T w={w}>{children}</T>
    </span>
  );
}

function PullTabs() {
  const count = "bg-[#eff1f3] text-[#57606a]";
  return (
    <div className="mt-[31px] flex h-[50px] w-[1520px] items-stretch text-[16.600px] text-[#57606a]">
      <div className="flex w-[208px] shrink-0 items-center rounded-t-[7px] border border-b-0 border-[#d0d7de] pt-px pl-[20px] text-[#24292f]">
        <Oct n="discussion" className="-mt-px size-5" /><T w={102} className="ml-[9px] pt-px">Conversation</T>
        <Count className="mt-px ml-[9px] bg-[#eff1f3]">0</Count>
      </div>
      <div className="flex flex-1 items-center border-b border-[#d0d7de] pt-[2px] pl-[21px]">
        <Oct n="commit" className="-mt-px size-5" /><T w={70} className="ml-[9px] pt-px">Commits</T><Count className={`mt-px ml-[9px] ${count}`}>2</Count>
        <Oct n="checklist" className="-mt-px ml-[42px] size-5" /><T w={55} className="ml-[10px] pt-px">Checks</T><Count className={`mt-px ml-[9px] ${count}`}>0</Count>
        <Oct n="diff" className="-mt-px ml-[42px] size-5" /><T w={105} className="ml-[11px] pt-px">Files changed</T><Count className={`mt-px ml-[9px] ${count}`}>5</Count>
        <div className="-mt-px ml-auto flex items-center text-[14.300px]">
          <T w={18} className="text-[#1a7f37]">+0</T>
          <T w={18} className="ml-[5px] text-[#cf222e]">−0</T>
          <div className="ml-[5px] flex gap-px">
            {[0, 1, 2, 3, 4].map((i) => <span key={i} className="size-[10.200px] border border-[#ccd0d5] bg-[#eff1f3]" />)}
          </div>
        </div>
      </div>
    </div>
  );
}

function Caret({ fill, stroke, className }: { fill: string; stroke: string; className: string }) {
  return (
    <svg viewBox="0 0 11 20" className={`absolute -left-[10px] h-5 w-[11px] ${className}`}>
      <path d="M11 0v1L1 10l10 9v1z" fill={fill} />
      <path d="M10.500.5L1 10l9.500 9.500" fill={fill} stroke={stroke} strokeWidth="1.300" />
    </svg>
  );
}

const Line = ({ className }: { className: string }) => <div className={`ml-[90px] w-[2px] bg-[#d8dee4] ${className}`} />;

function CommitRow({ title, w, hash }: { title: string; w: number; hash: string }) {
  return (
    <div className="flex h-5 items-center font-['DejaVu_Sans_Mono',monospace] text-[13.200px] text-[#57606a]">
      <Oct n="commit" className="ml-[81px] size-5" />
      <Identicon className="-mt-[6px] ml-[20px] size-6" />
      <T w={w} className="ml-[8px] pt-[2px]">{title}</T>
      <T w={58} className="ml-auto pt-[2px]">{hash}</T>
    </div>
  );
}

function Timeline() {
  return (
    <div className="w-[1120px] pt-[20px]">
      <div className="flex h-[114px] text-[16.600px]">
        <Identicon className="-mt-px -ml-px size-[52px]" />
        <div className="relative ml-[19px] w-[1050px] rounded-[7px] border border-[#b6dcfd]">
          <div className="flex h-[46px] items-center rounded-t-[6px] border-b border-[#a8d8fb] bg-[#ddf4ff] pl-[20px] text-[#57606a]">
            <T w={119} className="pt-[2px] font-semibold text-[#24292f]">AniketKumar12</T>
            <T w={131} className="ml-[5px] pt-[2px]">commented now</T>
            <span className="mt-px ml-auto grid h-[25px] w-[66px] place-items-center rounded-full border border-[#a5d5fa] text-[14.200px] font-medium"><T w={46} className="pt-px">Owner</T></span>
            <svg viewBox="0 0 16 16" className="-mt-px ml-[14px] size-5 fill-none stroke-[#57606a]" strokeWidth="1.500">
              <circle cx="8" cy="8" r="7.250" />
              <path d="M5.300 10q2.700 2.700 5.400 0" strokeLinecap="round" />
              <circle cx="5.200" cy="6.800" r="1" fill="#57606a" stroke="none" />
              <circle cx="10.800" cy="6.800" r="1" fill="#57606a" stroke="none" />
            </svg>
            <Oct n="kebab" className="mr-[25px] ml-[10px] size-5" />
          </div>
          <div className="flex h-[67px] items-center pt-[2px] pl-[20px] text-[#24292f]"><T w={154}>created pull request</T></div>
          <Caret fill="#ddf4ff" stroke="#a8d8fb" className="top-[14px]" />
        </div>
      </div>
      <Line className="h-[20px]" />
      <div className="mt-[2px] mb-[2px] flex h-[36px] items-center text-[16.600px] text-[#57606a]">
        <span className="ml-[73px] grid size-9 place-items-center rounded-full bg-[#eaeef2]"><Oct n="push" /></span>
        <T w={119} className="ml-[12px] font-semibold text-[#24292f]">AniketKumar12</T>
        <T w={231} className="ml-[5px]">added 2 commits 3 hours ago</T>
      </div>
      <Line className="h-[20px]" />
      <CommitRow title="rename first file" w={141} hash="089e07a" />
      <Line className="h-[25px]" />
      <CommitRow title="change file 2, 3 ,4,5" w={174} hash="8529871" />
      <Line className="h-[30px]" />
      <div className="h-[2px] bg-[#d0d7de]" />
      <div className="flex h-[66px] items-center pt-[2px] pl-[70px] text-[16.600px] text-[#57606a]">
        <T w={289}>Add more commits by pushing to the</T>
        <T w={165} className="ml-[5px] pt-[3px] font-['DejaVu_Sans_Mono',monospace] text-[13.100px] font-bold text-[#24292f]">feature-rename-files</T>
        <T w={79} className="ml-[5px]">branch on</T>
        <T w={222} className="ml-[4px] font-semibold text-[#24292f]">AniketKumar12/aniket_ass_1</T>.
      </div>
      <div className="flex">
        <span className="ml-px grid size-[50px] place-items-center rounded-[7px] bg-[#2da44e]"><GoGitMerge className="size-[30px] text-white" /></span>
        <div className="relative ml-[19px] h-[260px] w-[1050px] rounded-[7px] border border-[#2da44e]">
          <div className="flex h-[93px] border-b border-[#d0d7de] pl-[18px]">
            <span className="mt-[20px] grid size-[38px] place-items-center rounded-full bg-[#f6f8fa]"><Oct n="branch" /></span>
            <div className="ml-[12px] pt-[21px] text-[15.400px] text-[#57606a]">
              <div className="flex h-[28px] items-center text-[19px] font-semibold"><T w={514}>Require approval from specific reviewers before merging</T></div>
              <div className="mt-px flex h-[26px] items-center"><T w={167} className="text-[#0969da]">Branch protection rules</T><T w={488} className="ml-[4px]">ensure specific people approve pull requests before they're merged.</T></div>
            </div>
            <div className={`${btn} mt-[27px] ml-auto h-[40px] w-[112px] justify-center text-[16.600px]!`}><T w={68} className="pt-px">Add rule</T></div>
            <Oct n="x" className="mt-[37px] mr-[20px] ml-[19px] size-5 text-[#57606a]" />
          </div>
          <div className="flex h-[93px] pl-[18px]">
            <span className="mt-[20px] grid size-[38px] place-items-center rounded-full bg-[#f6f8fa]">
              <svg viewBox="0 0 16 16" className="size-5 fill-none stroke-[#57606a]" strokeWidth="1.400">
                <path d="M.8 14.500V8a7.200 6.800 0 0 1 14.400 0v6.500" strokeLinecap="round" />
                <rect x="3.200" y="5.200" width="9.600" height="5.200" rx="2.400" />
                <path d="M5 8l1.500-1L8 8.300 9.500 7 11 8M5.500 13.500h5" strokeWidth="1.500" />
              </svg>
            </span>
            <div className="ml-[12px] pt-[21px] text-[15.400px] text-[#57606a]">
              <div className="flex h-[28px] items-center text-[19px] font-semibold"><T w={395}>Continuous integration has not been set up</T></div>
              <div className="mt-px flex h-[26px] items-center">
                <T w={108} className="text-[#0969da]">GitHub Actions</T><T w={27} className="ml-[5px]">and</T>
                <T w={132} className="ml-[4px] text-[#0969da]">several other apps</T>
                <T w={419} className="ml-[4px]">can be used to automatically catch bugs and enforce style.</T>
              </div>
            </div>
          </div>
          <Caret fill="#fff" stroke="#2da44e" className="top-[15px]" />
        </div>
      </div>
    </div>
  );
}

function SideSection({ title, w, gear = "", first, children }: { title: string; w: number; gear?: string; first?: boolean; children: React.ReactNode }) {
  return (
    <section className={`border-b border-[#d8dee4] ${first ? "h-[158px] pt-[40px]" : "h-[96px] pt-[20px]"}`}>
      <div className="flex h-[24px] items-center justify-between font-semibold text-[#57606a]">
        <T w={w}>{title}</T>
        <Oct n="gear" className={`size-5 text-[#57606a] ${gear}`} />
      </div>
      <div className="mt-[10px] text-[#24292f]">{children}</div>
    </section>
  );
}

function Sidebar() {
  return (
    <aside className="ml-[30px] w-[370px] text-[14.200px]">
      <SideSection title="Reviewers" w={67} first>
        <div className="-mt-px flex h-[22px] items-center"><T w={73}>No reviews</T></div>
        <div className="mt-[11px] flex h-[22px] items-center"><T w={108}>Still in progress?</T><T w={106} className="ml-[4px] text-[#57606a]">Convert to draft</T></div>
      </SideSection>
      <SideSection title="Assignees" w={67} gear="mt-[2px]">
        <div className="flex h-[22px] items-center"><T w={64}>No one—</T><T w={98} className="text-[#57606a]">assign yourself</T></div>
      </SideSection>
      <SideSection title="Labels" w={42} gear="-mt-[3px]"><div className="flex h-[22px] items-center"><T w={60}>None yet</T></div></SideSection>
      <SideSection title="Projects" w={54} gear="-mt-[3px]"><div className="flex h-[22px] items-center"><T w={60}>None yet</T></div></SideSection>
      <SideSection title="Milestone" w={67} gear="-mt-[3px]"><div className="flex h-[22px] items-center"><T w={88}>No milestone</T></div></SideSection>
    </aside>
  );
}

/* ---------- taskbar ---------- */

const Zebra = () => (
  <svg viewBox="0 0 99 48" className="h-[48px] w-[99px]">
    <path d="M0 48q8-8 22-8h77v8z" fill="#b4b574" />
    <ellipse cx="50" cy="44" rx="34" ry="3" fill="#8e9b55" opacity=".6" />
    <g stroke="#d9b9a4" strokeWidth="4" fill="none">
      <path d="M34 27l-2 8-4 9M40 28l4 8 3 8M73 25l-4 9-5 10M78 24l4 10 3 9" />
    </g>
    <path d="M13 19q1-9 6-12l1-4 5 2 8-1q6 4 14 4 15-1 25 0 10 3 10 12l-4 7q-6 2-9 0-18 6-32 2-7-2-11-9l-7 4q-6 2-6-5z" fill="#f1dccb" />
    <path d="M12.500 19q1 6 6 4l-3-5z" fill="#4c3b37" />
    <path d="M27 5l-2 13M32 5q1 8-2 16M37 6q2 8-1 18M43 8q1 9 0 19M49 8q0 10 3 18M55 8q1 10 6 17M61 8q2 8 8 14M67 9q3 7 9 11M73 11l6 7M20 8l5 3M18 12l4 2M29 36l4 1M43 35l4-1M68 34l4 1M80 33l4 0" stroke="#4a3d38" strokeWidth="1.900" fill="none" />
    <path d="M22 3q8-3 17 3" stroke="#6b4a3c" strokeWidth="2.200" fill="none" />
    <path d="M79 15q6 2 9 9" stroke="#4a3a35" strokeWidth="2.600" fill="none" />
    <path d="M26 44h4M46 44h4M62 44h4M83 43h5" stroke="#3d322f" strokeWidth="2.500" />
    <circle cx="20" cy="13" r="1.600" fill="#201815" />
  </svg>
);

const Edge = () => (
  <svg viewBox="0 0 30 30" className="size-[31px]">
    <defs>
      <linearGradient id="edge-top" x1="0" y1="0" x2="1" y2="0.300"><stop offset="0" stopColor="#1b9de2" /><stop offset=".5" stopColor="#35c1d6" /><stop offset="1" stopColor="#6be04f" /></linearGradient>
      <linearGradient id="edge-low" x1="0" y1="0" x2="0" y2="1"><stop offset="0" stopColor="#1b8fe0" /><stop offset="1" stopColor="#1150a0" /></linearGradient>
    </defs>
    <path d="M.3 14A15 15 0 0 1 15 0c9 0 15 6 15 12.500 0 5-4 8-8.500 8-4 0-5-1.500-4-3 1-3-1-7-6-8C6 9 1.500 10.500.3 14z" fill="url(#edge-top)" />
    <path d="M.2 14C2 9 7 8.500 11 9.500c4 1 6 4 6 6.500-7-1-8 13 8 10A15 15 0 0 1 .2 14z" fill="#1a86dc" />
    <path d="M13 11c-4 2-6 6-5 11 1 4 4 7 7.500 8 5 0 9-3 11.500-6-8 3-15-2-12.500-8z" fill="url(#edge-low)" />
  </svg>
);

const Firefox = () => (
  <svg viewBox="0 0 30 30" className="size-[30px]">
    <defs>
      <linearGradient id="ff" x1=".8" y1="0" x2=".2" y2="1"><stop offset="0" stopColor="#ffe54b" /><stop offset=".45" stopColor="#ff8a16" /><stop offset="1" stopColor="#f0137a" /></linearGradient>
    </defs>
    <path d="M19 0c1 3 4 4 5 7l2-1c5 7 4 14 0 19A14 14 0 0 1 2 22C0 16 2 10 5 6l1 3 4-5v5q4-4 9-9z" fill="url(#ff)" />
    <circle cx="15" cy="16.500" r="7" fill="#7a3be0" />
    <path d="M6 12q4-4 10-1l4 2q-5 0-6 3-2 2-6 0z" fill="#ff9a1c" />
    <path d="M20 9q5 4 3 11-2 5-8 5 9-5 5-16z" fill="#ffc02c" />
  </svg>
);

const Explorer = () => (
  <svg viewBox="0 0 28 30" className="w-[28px]">
    <path d="M1 3h9l3 3h-3v4H1z" fill="#d8970a" />
    <path d="M1 7h10l2-3h13q1 0 1 1v22H1z" fill="#fdc94c" />
    <path d="M1 7h10l2-3h13q1 0 1 1v5H1z" fill="#ffd666" />
    <path d="M6 27V17q0-2 2-2h13q2 0 2 2v10h-4.500v-6h-8v6z" fill="#2e8ad0" />
  </svg>
);

const Chrome = () => (
  <svg viewBox="0 0 30 30" className="size-[30px]">
    <circle cx="15" cy="15" r="15" fill="#fcc31e" />
    <path d="M15 15L2 7.500A15 15 0 0 1 28 7.500L27.500 9H15z" fill="#e33b2e" />
    <path d="M15 22l-1.500 8A15 15 0 0 1 2 7.500l7 10z" fill="#279847" />
    <path d="M15 15L28 7.500H15z" fill="#e33b2e" />
    <circle cx="15" cy="15" r="7.200" fill="#fff" />
    <circle cx="15" cy="15" r="5.800" fill="#1a73e8" />
  </svg>
);

const GitDiamond = () => (
  <svg viewBox="0 0 30 30" className="size-[31px]">
    <g transform="rotate(45 15 15)">
      <rect x="4.500" y="4.500" width="10.300" height="10.300" rx="1.500" fill="#ff7a75" />
      <rect x="15.200" y="4.500" width="10.300" height="10.300" rx="1.500" fill="#8dd35f" />
      <rect x="4.500" y="15.200" width="10.300" height="10.300" rx="1.500" fill="#80b3ff" />
      <rect x="15.200" y="15.200" width="10.300" height="10.300" rx="1.500" fill="#ffe680" />
    </g>
    <path d="M13 8l2 3v10M15 11l5 5" stroke="#e8e8e8" strokeWidth="1.600" fill="none" />
    <circle cx="15" cy="21" r="2" fill="#e8e8e8" /><circle cx="20" cy="16" r="2" fill="#e8e8e8" /><circle cx="15" cy="11" r="1.800" fill="#e8e8e8" />
  </svg>
);

const Slack = () => (
  <svg viewBox="0 0 30 30" className="size-[29px]">
    <circle cx="15" cy="15" r="15" fill="#fff" />
    <g strokeWidth="3.800" strokeLinecap="round">
      <path d="M12.300 7v.1M7 12.300h5.300" stroke="#36c5f0" />
      <path d="M17.700 7v5.300M23 12.300h.1" stroke="#2eb67d" />
      <path d="M17.700 17.700H23M17.700 23v.1" stroke="#ecb22e" />
      <path d="M12.300 17.700V23M7 17.700h.1" stroke="#e01e5a" />
    </g>
  </svg>
);

const Notepad = () => (
  <svg viewBox="0 0 30 30" className="size-[30px]">
    <path d="M22 3l6 22-5 3-6-3z" fill="#8b7a68" />
    <path d="M22 3l4 22-4 2z" fill="#f4f1ea" />
    <path d="M9 3l14 2-5 20L1 20z" fill="#8fc7d2" />
    <path d="M9 3l14 2-2 6L6 9z" fill="#c5e4ea" />
    <path d="M1 20l17 5-1 2L2 22z" fill="#3f7d8c" />
    <path d="M9 2.500l14 2" stroke="#6f7478" strokeWidth="1.800" strokeDasharray="1.500 1" />
  </svg>
);

const VsCode = () => (
  <svg viewBox="0 0 30 30" className="size-[30px]">
    <path d="M1 10.500l2.500-2q.7-.4 1.300 0L22 22v7.500L1 11.500z" fill="#0b6bb0" />
    <path d="M1 19.500l2.500 2q.7.4 1.300 0L22 8V.5L1 18.500z" fill="#1484cd" />
    <path d="M22 .3l7 3q1 .5 1 1.500v20.400q0 1-1 1.500l-7 3z" fill="#2aa6f2" />
  </svg>
);

const apps = [
  { icon: <Edge />, bar: "" },
  { icon: <Firefox />, bar: "" },
  { icon: <Explorer />, bar: "half" },
  { icon: <Chrome />, bar: "active" },
  { icon: <GitDiamond />, bar: "full" },
  { icon: <Slack />, bar: "full" },
  { icon: <Notepad />, bar: "half" },
  { icon: <VsCode />, bar: "full" },
  { icon: <Teams className="size-[31px]" />, bar: "full" },
];

function Taskbar() {
  return (
    <div className="flex h-[50px] shrink-0 items-center bg-[#d6d6d6] text-black">
      <FaWindows className="ml-[20px] size-[20px]" />
      <div className="ml-[20px] flex h-[50px] w-[430px] items-center border border-[#c3c3c3] bg-white">
        <svg viewBox="0 0 20 20" className="ml-[14px] size-5 fill-none stroke-[#202020]" strokeWidth="1.500">
          <circle cx="13" cy="7" r="6.200" /><path d="M8.500 11.500L.8 19.200" />
        </svg>
        <T w={164} className="ml-[15px] text-[17.600px] text-[#2b2b2b]">Type here to search</T>
        <div className="ml-auto"><Zebra /></div>
      </div>
      <svg viewBox="0 0 22 22" className="ml-[19px] size-[21px] fill-none stroke-black" strokeWidth="1.500">
        <path d="M1.500 1v3.500h13V1M1.500 21v-3.500h13V21M1.500 7.500h13v7h-13zM19.500 1v5.500M19.500 12v9" /><path d="M18 7.500h3v3h-3z" fill="#000" stroke="none" />
      </svg>
      <div className="ml-[23px] flex">
        {apps.map((a, i) => (
          <div key={i} className={`flex h-[50px] w-[62px] flex-col items-center ${a.bar === "active" ? "bg-[#efefef]" : ""}`}>
            <div className="grid h-[47px] place-items-center pt-[2px]">{a.icon}</div>
            {a.bar === "half" && (
              <div className="flex h-[3px] w-[51px]"><span className="w-[41px] bg-[#0078d7]" /><span className="w-[10px] bg-[#66b0ea]" /></div>
            )}
            {a.bar === "full" && <div className="h-[3px] w-[51px] bg-[#0078d7]" />}
            {a.bar === "active" && <div className="h-[3px] w-full bg-[#0078d7]" />}
          </div>
        ))}
      </div>
      <div className="ml-auto flex items-center">
        <svg viewBox="0 0 32 30" className="w-[32px]">
          <defs>
            <linearGradient id="cloud" x1="0" y1="0" x2="0" y2="1"><stop offset="0" stopColor="#e4efff" /><stop offset="1" stopColor="#86aef4" /></linearGradient>
          </defs>
          <circle cx="22" cy="12" r="8" fill="#f59a1d" />
          <path d="M8 29q-7-1-7-6 0-5 5-6 1-6 8-6 6 0 8 5 8 0 9 6 0 6-6 7z" fill="url(#cloud)" />
          <circle cx="27" cy="4" r="4" fill="#d12d1b" />
        </svg>
        <T w={38} className="ml-[8px] pt-[2px] text-[17.400px]">26°C</T>
        <T w={111} className="ml-[10px] pt-[2px] text-[17.400px]">Mostly cloudy</T>
        <svg viewBox="0 0 16 10" className="ml-[20px] w-4 fill-none stroke-black" strokeWidth="1.400"><path d="M.5 9L8 1.500 15.500 9" /></svg>
        <svg viewBox="0 0 18 20" className="ml-[14px] w-[18px] fill-none stroke-black" strokeWidth="1.300">
          <rect x="3" y="5" width="8" height="10" rx="1.500" /><path d="M11 8.500l3.500-2v7l-3.500-2M3 2q4.500-2 9 0M3 18q4.500 2 9 0" />
        </svg>
        <svg viewBox="0 0 18 18" className="ml-[12px] w-[17px] fill-none stroke-black" strokeWidth="1.200">
          <path d="M1 17A16 16 0 0 1 17 1" stroke="#8a8a8a" /><path d="M5 17A12 12 0 0 1 17 5" stroke="#666" /><path d="M8.500 17A8.500 8.500 0 0 1 17 8.500M12 17a5 5 0 0 1 5-5" /><circle cx="16" cy="16" r="1.500" fill="#000" stroke="none" />
        </svg>
        <svg viewBox="0 0 20 16" className="ml-[10px] w-[20px] fill-none stroke-black" strokeWidth="1.200">
          <path d="M1 5.500h3L8 2v12l-4-3.500H1zM11 5.500q1.500 2.500 0 5M13.500 3.500q3 4.500 0 9" /><path d="M16.500 1.500q4 6.500 0 13" stroke="#8a8a8a" />
        </svg>
        <svg viewBox="0 0 22 16" className="ml-[9px] w-[21px]">
          <path d="M5 4.500h14.500v9H5z" fill="#000" stroke="#000" /><path d="M20.500 7h1.500v4h-1.500z" />
          <path d="M1 3h5v3q-2.500 3-5 0zM2 3V.5M5 3V.5M3.500 7v7h2" fill="#d6d6d6" stroke="#000" strokeWidth="1.200" />
        </svg>
        <T w={29} className="ml-[12px] pt-px text-[14.200px]">ENG</T>
        <div className="ml-[16px] flex w-[76px] flex-col items-center text-[14.200px] leading-[23px]">
          <T w={60}>02:53 PM</T>
          <T w={76}>31-01-2023</T>
        </div>
        <svg viewBox="0 0 21 21" className="ml-[23px] w-[21px] fill-none stroke-black" strokeWidth="1.300"><path d="M.7 1.500h19.600v15h-7l-2.800 3-2.800-3h-7z" /></svg>
        <div className="mr-[6px] ml-[24px] h-[50px] w-px bg-[#a0a0a0]" />
      </div>
    </div>
  );
}

export default function App() {
  return (
    <div className="flex h-[1080px] w-[1920px] flex-col overflow-hidden bg-white font-['Open_Sans',sans-serif] leading-normal">
      <TabStrip />
      <Toolbar />
      <div className="flex h-[941px] shrink-0 overflow-hidden">
        <div className="flex w-[1899px] flex-col overflow-hidden">
          <SiteHeader />
          <RepoHeader />
          <main className="ml-[190px]">
            <PullHeader />
            <PullTabs />
            <div className="flex">
              <Timeline />
              <Sidebar />
            </div>
          </main>
        </div>
        <div className="flex w-[21px] flex-col items-center bg-[#f1f1f1]">
          <svg viewBox="0 0 10 6" className="mt-[9px] w-[9px] fill-[#505050]"><path d="M0 6l5-6 5 6z" /></svg>
          <div className="mt-[28px] h-[482px] w-[18px] bg-[#c1c1c1]" />
          <svg viewBox="0 0 10 6" className="mt-auto mb-[8px] w-[9px] fill-[#505050]"><path d="M0 0l5 6 5-6z" /></svg>
        </div>
      </div>
      <Taskbar />
    </div>
  );
}
